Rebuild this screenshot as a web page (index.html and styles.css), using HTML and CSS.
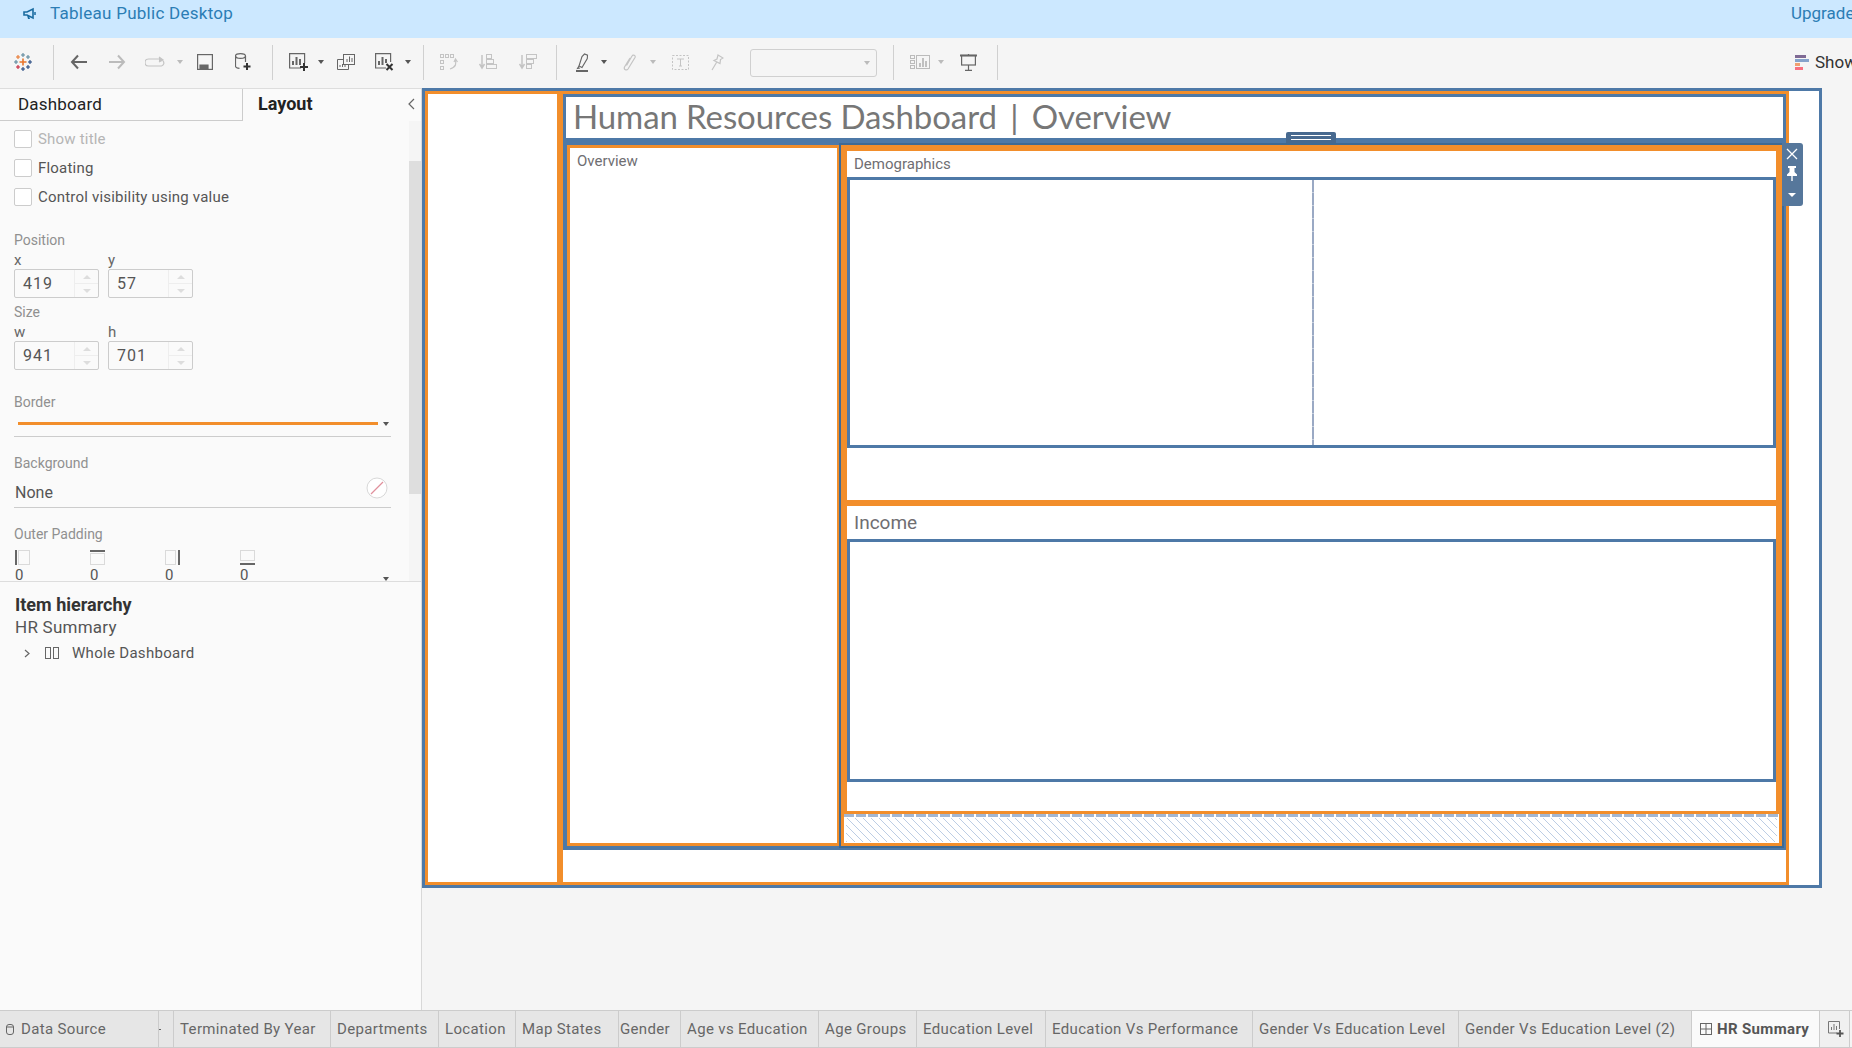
FILE: index.html
```html
<!DOCTYPE html>
<html lang="en">
<head>
  <meta charset="UTF-8" />
  <title>Tableau Public Desktop</title>
  <link rel="stylesheet" href="styles.css">
</head>
<body>
  <div class="app">
    <div class="topbar">
      <svg class="megaphone" width="14" height="14" viewBox="0 0 14 14"><path d="M1 5h3l6-3v9L4 8H1z" fill="none" stroke="#1a6ba0" stroke-width="1.600"/><path d="M4 8l1 4h2l-1-3" fill="#1a6ba0"/><path d="M12 5v3" stroke="#1a6ba0" stroke-width="1.500"/></svg>
      <span class="app-name">Tableau Public Desktop</span>
      <span class="upgrade">Upgrade</span>
    </div>

    <div class="toolbar">
      <div class="tool"><svg width="20" height="20" viewBox="0 0 20 20" fill="none" stroke-width="1.100">
        <path d="M10 6.500v7M6.500 10h7" stroke="#e8762d" stroke-width="1.600"/>
        <path d="M10 1v4M8 3h4" stroke="#5b879b"/><path d="M10 15v4M8 17h4" stroke="#1f447e"/>
        <path d="M1 10h4M3 8v4" stroke="#59879b"/><path d="M15 10h4M17 8v4" stroke="#1f447e"/>
        <path d="M5 3v4M3 5h4" stroke="#e8762d"/><path d="M15 3v4M13 5h4" stroke="#5b879b"/>
        <path d="M5 13v4M3 15h4" stroke="#c72037"/><path d="M15 13v4M13 15h4" stroke="#1f447e"/></svg></div>
      <div class="tool"><i class="sep"></i></div>
      <div class="tool"><svg width="18" height="16" viewBox="0 0 18 16" fill="none" stroke="#666" stroke-width="2"><path d="M17 8H2M8 1.500L2 8l6 6.500"/></svg></div>
      <div class="tool"><svg width="18" height="16" viewBox="0 0 18 16" fill="none" stroke="#bbb" stroke-width="2"><path d="M1 8h15M10 1.500L16 8l-6 6.500"/></svg></div>
      <div class="tool"><svg width="20" height="12" viewBox="0 0 20 12" fill="none" stroke="#c4c4c4" stroke-width="1.200"><path d="M15 3H3.500a3 3 0 0 0 0 7h13a3 3 0 0 0 1.500-5"/><path d="M14 1l4 3-4 2" fill="#c4c4c4"/></svg></div>
      <div class="tool"><i class="caret off"></i></div>
      <div class="tool"><svg width="16" height="16" viewBox="0 0 16 16" fill="none" stroke="#666" stroke-width="1.200"><rect x=".6" y=".6" width="14.800" height="14.800"/><path d="M3 15v-4h8v4" fill="#666"/></svg></div>
      <div class="tool"><svg width="16" height="18" viewBox="0 0 16 18" fill="none" stroke="#666" stroke-width="1.200"><ellipse cx="5.500" cy="3" rx="5" ry="2.400"/><path d="M.5 3v10c0 1.200 2 2.200 4 2.400M10.500 3v6"/><path d="M12 10v7M8.500 13.500h7" stroke="#333" stroke-width="2"/></svg></div>
      <div class="tool"><i class="sep"></i></div>
      <div class="tool"><svg width="19" height="18" viewBox="0 0 19 18" fill="none" stroke="#666" stroke-width="1.200"><path d="M12 15H.6V.6h15V10"/><path d="M4 12V8M7.500 12V4M11 12V6" stroke-width="2"/><path d="M15 10v8M11 14h8" stroke="#333" stroke-width="2"/></svg></div>
      <div class="tool"><i class="caret"></i></div>
      <div class="tool"><svg width="18" height="16" viewBox="0 0 18 16" fill="none" stroke="#666" stroke-width="1"><rect x="6.500" y=".5" width="11" height="10"/><path d="M6.500 5.500H.5v10h11v-5"/><path d="M10 8V5M12.500 8V2.500M15 8V4M3 13v-2M5.500 13v-3M8 13v-2"/></svg></div>
      <div class="tool"><svg width="19" height="18" viewBox="0 0 19 18" fill="none" stroke="#666" stroke-width="1.200"><path d="M11 15H.6V.6h15V9"/><path d="M4 12V8M7.500 12V4M11 10V6" stroke-width="2"/><path d="M11.500 11l6 6M17.500 11l-6 6" stroke="#333" stroke-width="2"/></svg></div>
      <div class="tool"><i class="caret"></i></div>
      <div class="tool"><i class="sep"></i></div>
      <div class="tool"><svg width="18" height="17" viewBox="0 0 18 17" fill="none" stroke="#c4c4c4" stroke-width="1"><rect x=".5" y=".5" width="3" height="3"/><rect x="5.500" y=".5" width="3" height="3"/><rect x="10.500" y=".5" width="3" height="3"/><rect x=".5" y="6.500" width="3" height="3"/><rect x=".5" y="12.500" width="3" height="3"/><path d="M15 6c2 3 1 7-5 9M14 8l1.500-3 2 3" stroke-width="1.200"/></svg></div>
      <div class="tool"><svg width="18" height="16" viewBox="0 0 18 16" fill="none" stroke="#c4c4c4" stroke-width="1"><path d="M3 1v12M.5 10L3 14l2.500-4" stroke-width="1.500"/><rect x="7.500" y=".5" width="5" height="4"/><rect x="7.500" y="5.500" width="7" height="4"/><rect x="7.500" y="10.500" width="10" height="4"/></svg></div>
      <div class="tool"><svg width="18" height="16" viewBox="0 0 18 16" fill="none" stroke="#c4c4c4" stroke-width="1"><path d="M3 1v12M.5 10L3 14l2.500-4" stroke-width="1.500"/><rect x="7.500" y=".5" width="10" height="4"/><rect x="7.500" y="5.500" width="7" height="4"/><rect x="7.500" y="10.500" width="5" height="4"/></svg></div>
      <div class="tool"><i class="sep"></i></div>
      <div class="tool"><svg width="14" height="19" viewBox="0 0 14 19" fill="none" stroke="#666" stroke-width="1.100"><path d="M3 13L6 3.500 8.500 1l3 1.200-.2 3.300L6 14.500z"/><path d="M3 13l-1.500 2.500 2.500-.5"/><path d="M0 18h12" stroke-width="2"/></svg></div>
      <div class="tool"><i class="caret"></i></div>
      <div class="tool"><svg width="13" height="18" viewBox="0 0 13 18" fill="none" stroke="#c4c4c4" stroke-width="1.200"><path d="M3.500 12.500L9 3c1-2 4-.5 3 1.500L5 16c-1.500 2-4.500.5-3.500-2L7 5"/></svg></div>
      <div class="tool"><i class="caret off"></i></div>
      <div class="tool"><svg width="17" height="15" viewBox="0 0 17 15" fill="none" stroke="#c4c4c4" stroke-width="1"><rect x=".5" y=".5" width="16" height="14" stroke-dasharray="2 1.500"/><path d="M5 4h7M8.500 4v7M7 11h3"/></svg></div>
      <div class="tool"><svg width="13" height="17" viewBox="0 0 13 17" fill="none" stroke="#c4c4c4" stroke-width="1.200"><path d="M7 1l5 3-2.500 1.500-.5 4L3 6.500 6 5zM5.500 8.500L1 16"/></svg></div>
      <div class="font-select"><i class="caret off"></i></div>
      <div class="tool"><i class="sep"></i></div>
      <div class="tool"><svg width="20" height="14" viewBox="0 0 20 14" fill="none" stroke="#bbb" stroke-width="1"><rect x=".5" y=".5" width="4" height="3"/><rect x=".5" y="5.500" width="4" height="3"/><rect x=".5" y="10.500" width="4" height="3"/><rect x="6.500" y=".5" width="13" height="13"/><path d="M10 12V8M13 12V3M16 12V6" stroke-width="1.800"/></svg></div>
      <div class="tool"><i class="caret off"></i></div>
      <div class="tool"><svg width="17" height="17" viewBox="0 0 17 17" fill="none" stroke="#666" stroke-width="1.200"><path d="M0 1.500h17" stroke-width="2"/><rect x="1.600" y="1.500" width="13.800" height="9.500"/><path d="M8.500 0v1M8.500 11v5M5 16.400h7"/></svg></div>
      <div class="tool"><i class="sep"></i></div>
      <div></div>
      <div class="show-me">
        <svg width="14" height="15" viewBox="0 0 14 15"><rect width="11" height="3" fill="#7f6a94"/><rect y="4" width="14" height="3" fill="#86a3cb"/><rect y="8" width="5" height="3" fill="#f0a070"/><rect y="12" width="8" height="3" fill="#f8707f"/></svg>
        <span>Show Me</span>
      </div>
    </div>

    <div class="workspace">
      <div class="sidebar">
        <div class="side-tabs">
          <div class="side-tab">Dashboard</div>
          <div class="side-tab active">Layout</div>
          <svg class="collapse" width="7" height="12" viewBox="0 0 7 12" fill="none" stroke="#666" stroke-width="1.200"><path d="M6 1L1 6l5 5"/></svg>
        </div>

        <div class="side-upper">
          <div class="side-form">
            <label class="check disabled"><i class="box"></i>Show title</label>
            <label class="check"><i class="box"></i>Floating</label>
            <label class="check"><i class="box"></i>Control visibility using value</label>

            <div class="group-label first">Position</div>
            <div class="coords">
              <div class="coord"><div class="coord-label">x</div><div class="num"><span>419</span><div class="spin"><i></i><i></i></div></div></div>
              <div class="coord"><div class="coord-label">y</div><div class="num"><span>57</span><div class="spin"><i></i><i></i></div></div></div>
            </div>
            <div class="group-label tight">Size</div>
            <div class="coords">
              <div class="coord"><div class="coord-label">w</div><div class="num"><span>941</span><div class="spin"><i></i><i></i></div></div></div>
              <div class="coord"><div class="coord-label">h</div><div class="num"><span>701</span><div class="spin"><i></i><i></i></div></div></div>
            </div>

            <div class="group-label border-label">Border</div>
            <div class="border-pick"><i class="border-line"></i><i class="caret"></i></div>

            <div class="group-label">Background</div>
            <div class="bg-pick"><span>None</span>
              <svg width="22" height="22" viewBox="0 0 22 22" fill="#fff"><circle cx="11" cy="11" r="10" stroke="#d8d8d8"/><path d="M5 17L17 5" stroke="#e0909c" stroke-width="1.300"/></svg>
            </div>

            <div class="group-label">Outer Padding</div>
            <div class="paddings">
              <div class="pad"><svg width="15" height="15" viewBox="0 0 15 15" fill="none" stroke="#bbb" stroke-dasharray="1 1"><rect x="3.500" y=".5" width="11" height="14"/><path d="M1 0v15" stroke="#666" stroke-width="2" stroke-dasharray="none"/></svg><span>0</span></div>
              <div class="pad"><svg width="15" height="15" viewBox="0 0 15 15" fill="none" stroke="#bbb" stroke-dasharray="1 1"><rect x=".5" y="3.500" width="14" height="11"/><path d="M0 1h15" stroke="#666" stroke-width="2" stroke-dasharray="none"/></svg><span>0</span></div>
              <div class="pad"><svg width="15" height="15" viewBox="0 0 15 15" fill="none" stroke="#bbb" stroke-dasharray="1 1"><rect x=".5" y=".5" width="10" height="14"/><path d="M14 0v15" stroke="#666" stroke-width="2" stroke-dasharray="none"/></svg><span>0</span></div>
              <div class="pad"><svg width="15" height="15" viewBox="0 0 15 15" fill="none" stroke="#bbb" stroke-dasharray="1 1"><rect x=".5" y=".5" width="14" height="10"/><path d="M0 14h15" stroke="#666" stroke-width="2" stroke-dasharray="none"/></svg><span>0</span></div>
              <i class="caret pad-caret"></i>
            </div>
          </div>
          <div class="scrollbar"><div class="thumb"></div></div>
        </div>

        <div class="hierarchy">
          <div class="h-title">Item hierarchy</div>
          <div class="h-name">HR Summary</div>
          <div class="h-item">
            <svg width="6" height="9" viewBox="0 0 6 9" fill="none" stroke="#666" stroke-width="1.200"><path d="M1 1l4 3.500L1 8"/></svg>
            <svg width="14" height="12" viewBox="0 0 14 12" fill="none" stroke="#666"><rect x=".5" y=".5" width="5" height="11"/><rect x="8.500" y=".5" width="5" height="11"/></svg>
            <span>Whole Dashboard</span>
          </div>
        </div>
      </div>

      <div class="canvas">
        <div class="frame">
          <div class="root">
            <div class="left-col"></div>
            <div class="main">
              <div class="main-box">
                <div class="dash-title">Human Resources Dashboard <span class="pipe">|</span> Overview</div>
                <div class="main-row">
                  <div class="overview"><div class="overview-title">Overview</div></div>
                  <div class="right-col">
                    <div class="handle"><i></i><i></i></div>
                    <div class="controls">
                      <svg width="12" height="12" viewBox="0 0 12 12" fill="none" stroke="#fff" stroke-width="1.300"><path d="M1 1l10 10M11 1L1 11"/></svg>
                      <svg width="12" height="15" viewBox="0 0 12 15" fill="#fff"><path d="M2 0h8v2H8.500v4L11 8.500V10H6.700v5H5.300v-5H1V8.500L3.500 6V2H2z"/></svg>
                      <i class="ctrl-caret"></i>
                    </div>
                    <div class="section demographics">
                      <div class="section-title">Demographics</div>
                      <div class="chart-box split"><div class="split-pane left"></div><i class="split-line"></i><div class="split-pane"></div></div>
                    </div>
                    <div class="section income">
                      <div class="section-title big">Income</div>
                      <div class="chart-box"></div>
                    </div>
                    <div class="hatch-wrap"><div class="hatch-dash"></div><div class="hatch"></div></div>
                  </div>
                </div>
              </div>
              <div class="main-rest"></div>
            </div>
          </div>
        </div>
      </div>
    </div>

    <div class="tabs">
      <div class="tab"><svg width="8" height="11" viewBox="0 0 8 11" fill="none" stroke="#666"><rect x=".5" y=".5" width="7" height="10" rx="2.500"/><path d="M.5 3h7"/></svg>Data Source</div>
      <div class="tab stub"><i></i></div>
      <div class="tab">Terminated By Year</div>
      <div class="tab">Departments</div>
      <div class="tab">Location</div>
      <div class="tab">Map States</div>
      <div class="tab tight">Gender</div>
      <div class="tab">Age vs Education</div>
      <div class="tab">Age Groups</div>
      <div class="tab">Education Level</div>
      <div class="tab">Education Vs Performance</div>
      <div class="tab">Gender Vs Education Level</div>
      <div class="tab">Gender Vs Education Level (2)</div>
      <div class="tab current"><svg width="12" height="12" viewBox="0 0 12 12" fill="none" stroke="#666"><rect x=".5" y=".5" width="11" height="11"/><path d="M6 0v12M0 6h12"/></svg>HR Summary</div>
      <div class="tab new"><svg width="16" height="16" viewBox="0 0 16 16" fill="none" stroke="#777"><path d="M9 12H.5V.5h11V8"/><path d="M3.500 9V6M6 9V3M8.500 9V5"/><path d="M12 9v7M8.500 12.500h7" stroke="#555" stroke-width="1.800"/></svg></div>
      <div class="tab-end"></div>
    </div>
  </div>
</body>
</html>
```
FILE: styles.css
```css
body {
  margin: 0;
  font-family: Roboto, sans-serif;
  font-size: 15px;
  color: #555;
  background: #f5f5f5;
  overflow: hidden;
}
i {
  display: block;
}
.app {
  display: flex;
  flex-direction: column;
  width: 1852px;
  height: 1048px;
  overflow: hidden;
}

/* top bar */
.topbar {
  flex: none;
  display: flex;
  align-items: flex-start;
  height: 38px;
  padding: 3px 0 0 23px;
  box-sizing: border-box;
  background: #cce8ff;
  color: #2b7db5;
  font-size: 17px;
  line-height: 20px;
}
.megaphone {
  margin: 4px 13px 0 0;
}
.app-name {
  letter-spacing: 0.27px;
}
.upgrade {
  margin-left: auto;
  width: 61px;
  overflow: hidden;
}

/* toolbar */
.toolbar {
  flex: none;
  display: grid;
  grid-template-columns: 46px 14px 38px 38px 38px 12px 38px 38px 20px 32px 14px 36px 40px 8px 22px 30px 48px 32px 24px 30px 12px 38px 10px 44px 30px 145px 32px 22px 20px 34px 24px 1fr 57px;
  height: 50px;
  padding-bottom: 2px;
  box-sizing: border-box;
  background: #f5f5f5;
}
.tool {
  display: flex;
  align-items: center;
  justify-content: center;
  min-width: 0;
}
.sep {
  width: 1px;
  height: 35px;
  background: #d0d0d0;
}
.caret {
  width: 0;
  height: 0;
  border-left: 3.5px solid transparent;
  border-right: 3.5px solid transparent;
  border-top: 4px solid #555;
}
.caret.off {
  border-top-color: #bbb;
}
.font-select {
  justify-self: end;
  align-self: center;
  display: flex;
  align-items: center;
  justify-content: flex-end;
  width: 127px;
  height: 28px;
  margin-top: 2px;
  padding-right: 6px;
  box-sizing: border-box;
  border: 1px solid #d0d0d0;
  border-radius: 3px;
}
.show-me {
  display: flex;
  align-items: center;
  gap: 6px;
  overflow: hidden;
  white-space: nowrap;
  font-size: 17px;
  color: #333;
}
.show-me svg {
  flex: none;
}

/* main area */
.workspace {
  flex: 1;
  display: flex;
  min-height: 0;
}
.sidebar {
  flex: none;
  display: flex;
  flex-direction: column;
  width: 422px;
  box-sizing: border-box;
  border-right: 1px solid #d8d8d8;
  background: #fafafa;
}
.side-tabs {
  position: relative;
  flex: none;
  display: flex;
  height: 33px;
  border-top: 1px solid #ddd;
  box-sizing: border-box;
}
.side-tab {
  width: 243px;
  padding-left: 18px;
  box-sizing: border-box;
  border-right: 1px solid #ccc;
  border-bottom: 1px solid #ccc;
  font-size: 17px;
  line-height: 31px;
  letter-spacing: 0.2px;
  color: #222;
}
.side-tab.active {
  width: auto;
  padding-left: 15px;
  border: 0;
  font-weight: 700;
  font-size: 18px;
  line-height: 29px;
  letter-spacing: 0;
}
.collapse {
  position: absolute;
  left: 408px;
  top: 9px;
}
.side-upper {
  flex: none;
  display: flex;
  height: 460px;
  overflow: hidden;
}
.side-form {
  position: relative;
  flex: 1;
  min-width: 0;
  padding: 9px 18px 0 14px;
}
.check {
  display: flex;
  align-items: center;
  gap: 6px;
  height: 18px;
  margin-bottom: 11px;
  letter-spacing: 0.2px;
  color: #555;
}
.check.disabled {
  color: #b5b5b5;
}
.box {
  width: 16px;
  height: 16px;
  border: 1px solid #ccc;
  border-radius: 2px;
  background: #fff;
}
.group-label {
  margin-top: 17px;
  font-size: 14px;
  line-height: 18px;
  color: #909090;
}
.group-label.first {
  margin-top: 25px;
}
.group-label.tight {
  margin-top: 5px;
}
.group-label.border-label {
  margin-top: 23px;
}
.coords {
  display: flex;
  gap: 9px;
  margin-top: 2px;
}
.coord {
  width: 85px;
}
.coord-label {
  font-size: 15px;
  line-height: 18px;
  color: #666;
}
.num {
  display: flex;
  height: 29px;
  box-sizing: border-box;
  border: 1px solid #ccc;
  border-radius: 2px;
  line-height: 27px;
  font-size: 16px;
  letter-spacing: 1px;
  color: #555;
}
.num span {
  flex: 1;
  padding-left: 8px;
}
.spin {
  flex: none;
  display: flex;
  flex-direction: column;
  width: 23px;
  border-left: 1px solid #eee;
}
.spin i {
  flex: 1;
  position: relative;
}
.spin i:first-child {
  border-bottom: 1px solid #eee;
}
.spin i::after {
  content: "";
  position: absolute;
  left: 8px;
  top: 5px;
  border-left: 4px solid transparent;
  border-right: 4px solid transparent;
}
.spin i:first-child::after {
  border-bottom: 4px solid #ddd;
}
.spin i:last-child::after {
  border-top: 4px solid #ddd;
}
.border-pick {
  display: flex;
  align-items: center;
  height: 26px;
  padding-left: 4px;
  box-sizing: border-box;
  border-bottom: 1px solid #ccc;
}
.border-line {
  width: 360px;
  height: 3px;
  margin-right: 5px;
  background: #f28e2b;
}
.bg-pick {
  display: flex;
  justify-content: space-between;
  align-items: flex-start;
  height: 36px;
  padding: 0 3px 0 1px;
  box-sizing: border-box;
  border-bottom: 1px solid #ccc;
  font-size: 16px;
}
.bg-pick span {
  line-height: 22px;
  margin-top: 10px;
}
.bg-pick svg {
  margin-top: 5px;
}
.paddings {
  position: relative;
  display: flex;
  margin-top: 7px;
}
.pad {
  width: 75px;
  padding-left: 1px;
  box-sizing: border-box;
  line-height: 16px;
}
.pad svg {
  display: block;
  margin-bottom: 2px;
}
.pad-caret {
  position: absolute;
  left: 369px;
  top: 27px;
}
.scrollbar {
  flex: none;
  width: 12px;
  background: #f5f5f5;
}
.thumb {
  height: 333px;
  margin-top: 40px;
  background: #dedede;
}
.hierarchy {
  flex: 1;
  padding: 12px 0 0 15px;
  border-top: 1px solid #ddd;
}
.h-title {
  font-weight: 700;
  font-size: 18px;
  line-height: 21px;
  color: #333;
}
.h-name {
  font-size: 17px;
  line-height: 24px;
  letter-spacing: 0.25px;
  color: #555;
}
.h-item {
  display: flex;
  align-items: center;
  margin-top: 3px;
  line-height: 22px;
}
.h-item svg:first-child {
  margin: 0 15px 0 9px;
}
.h-item span {
  margin-left: 13px;
  letter-spacing: 0.3px;
}

/* dashboard canvas */
.canvas {
  flex: 1;
  min-width: 0;
}
.frame {
  display: flex;
  width: 1400px;
  height: 800px;
  box-sizing: border-box;
  border: 3px solid #4e79a7;
  background: #fff;
}
.root {
  flex: none;
  display: flex;
  width: 1364px;
  box-sizing: border-box;
  border: 3px solid #f28e2b;
}
.left-col {
  flex: none;
  width: 135px;
  box-sizing: border-box;
  border-right: 6px solid #f28e2b;
}
.main {
  flex: 1;
  display: flex;
  flex-direction: column;
  min-width: 0;
}
.main-box {
  flex: none;
  height: 756px;
  padding: 3px 2px 2px 3px;
  box-sizing: border-box;
  background: #4e79a7;
}
.main-rest {
  flex: 1;
}
.dash-title {
  height: 41px;
  margin: 0 1px 5px 0;
  padding-left: 7px;
  box-sizing: border-box;
  background: #fff;
  font-family: Lato, sans-serif;
  font-size: 33px;
  line-height: 39px;
  letter-spacing: -0.1px;
  color: #777;
}
.pipe {
  margin: 0 5px;
}
.main-row {
  display: flex;
  height: 705px;
}
.overview {
  flex: none;
  width: 272px;
  margin: 2px 0 2px 1px;
  padding: 4px 7px;
  box-sizing: border-box;
  border: 3px solid #f28e2b;
  border-right-width: 2px;
  background: #fff;
}
.overview-title {
  line-height: 18px;
  color: #6f6e72;
}
.right-col {
  position: relative;
  flex: 1;
  display: flex;
  flex-direction: column;
  border: 2px solid #3f6a94;
  background: #f28e2b;
}
.handle {
  position: absolute;
  top: -13px;
  left: calc(50% - 26px);
  display: flex;
  flex-direction: column;
  gap: 3px;
  width: 50px;
  height: 11px;
  padding: 3px 5px 0;
  box-sizing: border-box;
  border-radius: 2px 2px 0 0;
  background: #47698f;
}
.handle i {
  height: 1px;
  background: #fff;
}
.controls {
  position: absolute;
  top: -2px;
  left: 100%;
  display: flex;
  flex-direction: column;
  width: 21px;
  height: 63px;
  padding: 5px 0 0 4px;
  box-sizing: border-box;
  border-radius: 0 3px 3px 0;
  background: #56779b;
}
.controls svg {
  margin-bottom: 6px;
}
.ctrl-caret {
  width: 0;
  margin: 6px 0 0 2px;
  border-left: 4px solid transparent;
  border-right: 4px solid transparent;
  border-top: 4px solid #fff;
}
.section {
  flex: none;
  margin: 0 6px;
  background: #fff;
}
.demographics {
  height: 349px;
  margin-top: 6px;
}
.income {
  height: 305px;
  margin-top: 6px;
}
.section-title {
  height: 26px;
  padding-left: 7px;
  box-sizing: border-box;
  line-height: 26px;
  color: #6f6e72;
}
.section-title.big {
  height: 33px;
  font-size: 19px;
  line-height: 34px;
}
.chart-box {
  height: 243px;
  box-sizing: border-box;
  border: 3px solid #4e79a7;
}
.chart-box.split {
  display: flex;
  height: 271px;
}
.split-pane {
  flex: 1;
}
.split-pane.left {
  flex: none;
  width: 462px;
}
.split-line {
  flex: none;
  width: 2px;
  background: repeating-linear-gradient(180deg, #9aa9c4 0 12px, #c5cedd 12px 13px);
}
.hatch-wrap {
  flex: none;
  height: 29px;
  margin: 3px 3px 0;
  background: #fff;
}
.hatch-dash {
  height: 3px;
  background: repeating-linear-gradient(90deg, #a4b7d2 0 10px, #fff 10px 12px);
}
.hatch {
  height: 24px;
  margin: 1px 2px 0;
  background: repeating-linear-gradient(45deg, #bccde4 0 1px, #fff 1px 5.66px);
}

/* sheet tabs */
.tabs {
  flex: none;
  display: grid;
  grid-template-columns: 159px 15px 157px 108px 77px 103px 62px 138px 98px 129px 207px 206px 233px 128px 30px 1fr;
  height: 38px;
  box-sizing: border-box;
  border-top: 1px solid #ccc;
  border-bottom: 1px solid #ccc;
  background: #e6e6e6;
}
.tab {
  display: flex;
  align-items: center;
  gap: 7px;
  padding-left: 6px;
  box-sizing: border-box;
  border-right: 1px solid #ccc;
  white-space: nowrap;
  overflow: hidden;
  letter-spacing: 0.35px;
  color: #666;
}
.tab.tight {
  padding-left: 1px;
}
.tab.stub {
  padding-left: 0;
}
.tab.stub i {
  width: 2px;
  height: 1px;
  background: #666;
}
.tab.current {
  gap: 5px;
  padding-left: 8px;
  background: #fafafa;
  font-weight: 700;
  color: #555;
}
.tab.new {
  padding-left: 8px;
  background: #f0f0f0;
}
.tab-end {
  background: #f5f5f5;
}
```
